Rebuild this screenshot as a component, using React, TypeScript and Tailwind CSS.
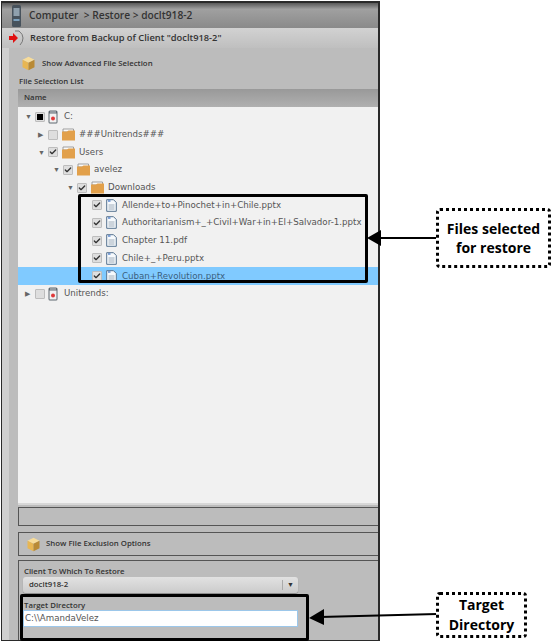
import type { ReactNode } from 'react';
import { Check } from 'lucide-react';

function Box3d({ size = 15 }: { size?: number }) {
  return (
    <svg width={size} height={size} viewBox="0 0 20 20" className="shrink-0">
      <path d="M10 1 L18 5 L10 9 L2 5 Z" fill="#f7dc9a" />
      <path d="M2 5 L10 9 L10 19 L2 15 Z" fill="#e8b652" />
      <path d="M18 5 L10 9 L10 19 L18 15 Z" fill="#b98a35" />
    </svg>
  );
}

function Folder() {
  return (
    <svg width="13" height="13" viewBox="0 0 13 13" className="shrink-0">
      <path d="M1 1 H11.5 V4 H1 Z" fill="#fafafa" stroke="#8a8a8a" strokeWidth="0.8" />
      <path d="M0 3.5 H5 L6.5 2.5 H13 V12.5 H0 Z" fill="#e2a04a" />
    </svg>
  );
}

function FileIcon() {
  return (
    <svg width="11" height="13" viewBox="0 0 11 13" className="shrink-0">
      <path d="M0.7 0.7 H7.5 L10.3 3.5 V12.3 H0.7 Z" fill="#f7fafd" stroke="#55728f" strokeWidth="1" />
      <path d="M2.5 6 H8.5 M2.5 8 H8.5 M2.5 10 H8.5" stroke="#8c9aa8" strokeWidth="0.8" />
      <path d="M2 2 H4.5" stroke="#3b6fc4" strokeWidth="1.2" />
    </svg>
  );
}

function DriveIcon() {
  return (
    <svg width="10" height="14" viewBox="0 0 10 14" className="shrink-0">
      <rect x="0.5" y="0.5" width="9" height="13" rx="1.5" fill="#5e6870" />
      <rect x="1.5" y="3.5" width="7" height="9" fill="#f2f2f2" />
      <circle cx="5" cy="8.5" r="2" fill="#e03a3a" />
      <rect x="2" y="1.5" width="6" height="1" fill="#c9ced2" />
    </svg>
  );
}

function Box({ state }: { state: 'checked' | 'partial' | 'empty' }) {
  return (
    <span className="w-[10px] h-[10px] shrink-0 bg-[#dedede] border border-[#bdbdbd] rounded-[1px] flex items-center justify-center">
      {state === 'checked' && <Check className="w-[10px] h-[10px] text-[#333]" strokeWidth={4} />}
      {state === 'partial' && <span className="w-[6px] h-[6px] bg-black" />}
    </span>
  );
}

function Row({ indent, arrow, state, icon, iconGap, label, selected }: {
  indent: string;
  arrow?: 'open' | 'closed';
  state: 'checked' | 'partial' | 'empty';
  icon: ReactNode;
  iconGap: string;
  label: string;
  selected?: boolean;
}) {
  return (
    <div className={`h-[17.7px] flex items-center ${indent} ${selected ? 'bg-[#80caff] text-[#3a5f80]' : 'text-[#555]'}`}>
      <span className="w-[10px] shrink-0 text-[7px] leading-none text-[#666]">
        {arrow === 'open' ? '▼' : arrow === 'closed' ? '▶' : ''}
      </span>
      <Box state={state} />
      <span className={`flex ${iconGap}`}>{icon}</span>
      <span className="whitespace-nowrap text-[8.66px] font-['DejaVu_Sans',sans-serif]">{label}</span>
    </div>
  );
}

function Panel({ children, className }: { children?: ReactNode; className: string }) {
  return <div className={`border border-[#555] border-r-0 ml-[9px] ${className}`}>{children}</div>;
}

const folderGap = 'ml-[4px] mr-[4px]';
const fileGap = 'ml-[4px] mr-[5px]';
const driveGap = 'ml-[3px] mr-[6px]';

export default function App() {
  return (
    <div className="relative w-[555px] h-[644px] bg-white overflow-hidden font-['Open_Sans',sans-serif]">
      {/* window */}
      <div className="w-[379px] h-[640px] ml-px mt-px border-t-2 border-l border-r-2 border-b border-[#2a2a2a] flex flex-col bg-[#bcbcbc]">
        <div className="h-[25px] shrink-0 bg-gradient-to-b from-[#5a5a5a] via-[#a0a0a0] via-25% to-[#8a8a8a] flex items-center pl-[10px] text-[#333] text-[10.2px] font-semibold">
          <svg width="9" height="22" viewBox="0 0 9 22" className="mr-[8px] shrink-0">
            <rect width="9" height="22" rx="1.5" fill="#47525c" />
            <rect x="1.5" y="3" width="6" height="8" fill="#8fa0ad" />
            <rect x="1.5" y="14" width="6" height="2" fill="#7ba0bd" />
          </svg>
          <span className="whitespace-pre">Computer  &gt; Restore &gt; doclt918-2</span>
        </div>
        <div className="h-[20px] shrink-0 bg-gradient-to-b from-[#d2d2d2] to-[#bfbfbf] flex items-center pl-[7px] text-[#333] text-[9.3px] font-semibold">
          <svg width="15" height="16" viewBox="0 0 15 16" className="mr-[6px] shrink-0">
            <path d="M6 1 H10 Q14 4 14 8 Q14 12 11 15" fill="none" stroke="#777" strokeWidth="1" />
            <path d="M0 6 H4 V3 L9 8 L4 13 V10 H0 Z" fill="#e01010" />
          </svg>
          <span>Restore from Backup of Client "doclt918-2"</span>
        </div>
        <div className="flex-1 flex min-h-0">
          <div className="w-[7px] shrink-0 bg-[#cfcfcf]" />
          <div className="flex-1 min-w-0 flex flex-col">
            <div className="flex items-center h-[23px] mt-[4px] pl-[12px] text-[7.8px] font-semibold text-[#333]">
              <Box3d />
              <span className="ml-[6px]">Show Advanced File Selection</span>
            </div>
            <div className="h-[12px] pl-[10px] text-[7.8px] font-semibold text-[#333] leading-[12px]">File Selection List</div>
            <div className="h-[18px] mt-[2px] ml-[9px] bg-gradient-to-b from-[#999] to-[#b0b0b0] pl-[6px] flex items-center text-[7.8px] font-semibold text-[#333]">Name</div>
            <div className="h-[396px] ml-[9px] pt-px bg-[#f1f1f1] shadow-[0_2px_0_#d8d8d8]">
              <Row indent="pl-[7px]" arrow="open" state="partial" icon={<DriveIcon />} iconGap={driveGap} label="C:" />
              <Row indent="pl-[20px]" arrow="closed" state="empty" icon={<Folder />} iconGap={folderGap} label="###Unitrends###" />
              <Row indent="pl-[20px]" arrow="open" state="checked" icon={<Folder />} iconGap={folderGap} label="Users" />
              <Row indent="pl-[35px]" arrow="open" state="checked" icon={<Folder />} iconGap={folderGap} label="avelez" />
              <Row indent="pl-[49px]" arrow="open" state="checked" icon={<Folder />} iconGap={folderGap} label="Downloads" />
              <Row indent="pl-[64px]" state="checked" icon={<FileIcon />} iconGap={fileGap} label="Allende+to+Pinochet+in+Chile.pptx" />
              <Row indent="pl-[64px]" state="checked" icon={<FileIcon />} iconGap={fileGap} label="Authoritarianism+_+Civil+War+in+El+Salvador-1.pptx" />
              <Row indent="pl-[64px]" state="checked" icon={<FileIcon />} iconGap={fileGap} label="Chapter 11.pdf" />
              <Row indent="pl-[64px]" state="checked" icon={<FileIcon />} iconGap={fileGap} label="Chile+_+Peru.pptx" />
              <Row indent="pl-[64px]" state="checked" icon={<FileIcon />} iconGap={fileGap} label="Cuban+Revolution.pptx" selected />
              <Row indent="pl-[7px]" arrow="closed" state="empty" icon={<DriveIcon />} iconGap={driveGap} label="Unitrends:" />
            </div>
            <Panel className="h-[19px] mt-[4px]" />
            <Panel className="h-[24px] mt-[6px] flex items-center pl-[7px] text-[7.8px] font-semibold text-[#333]">
              <Box3d />
              <span className="ml-[5px]">Show File Exclusion Options</span>
            </Panel>
            <Panel className="flex-1 mt-[4px] border-b-0 pl-[4px] pt-[5px]">
              <div className="pl-px text-[7.8px] font-semibold text-[#333] leading-[11px]">Client To Which To Restore</div>
              <div className="w-[275px] h-[16px] rounded-[3px] bg-gradient-to-b from-[#e2e2e2] to-[#cbcbcb] flex items-center text-[7.8px] font-semibold text-[#333] shadow-[0_1px_1px_#888]">
                <span className="flex-1 pl-[6px]">doclt918-2</span>
                <span className="w-[16px] text-center text-[7px] border-l border-[#aaa]">▼</span>
              </div>
              <div className="mt-[7px] pl-px text-[7.8px] font-semibold text-[#333] leading-[10px]">Target Directory</div>
              <div className="w-[275px] h-[17px] bg-white border border-[#9cc7ea] pl-px flex items-center text-[8.66px] text-[#555] font-['DejaVu_Sans',sans-serif]">C:\\AmandaVelez</div>
            </Panel>
          </div>
        </div>
      </div>

      {/* annotations */}
      <div className="absolute left-[78px] top-[194px] w-[290px] h-[89px] border-[3px] border-black rounded-[2px]" />
      <div className="absolute left-[20px] top-[594px] w-[289px] h-[47px] border-[3px] border-black rounded-[2px]" />
      <svg className="absolute left-0 top-0 pointer-events-none" width="555" height="644">
        <path d="M380 238 H437" stroke="black" strokeWidth="2" />
        <path d="M367 238 L381 230 V246 Z" fill="black" />
        <path d="M320 617 L437 614" stroke="black" strokeWidth="2" />
        <path d="M309 618 L324 609 V625 Z" fill="black" />
      </svg>
      <div className="absolute left-[436px] top-[208px] w-[115px] h-[60px] border-[3px] border-dotted border-black rounded-[4px] bg-white flex items-center justify-center text-center text-[14px] leading-[19px] font-bold text-black">
        Files selected<br />for restore
      </div>
      <div className="absolute left-[436px] top-[592px] w-[91px] h-[46px] border-[3px] border-dotted border-black rounded-[4px] bg-white flex items-center justify-center text-center text-[14px] leading-[20px] font-bold text-black">
        Target<br />Directory
      </div>
    </div>
  );
}
